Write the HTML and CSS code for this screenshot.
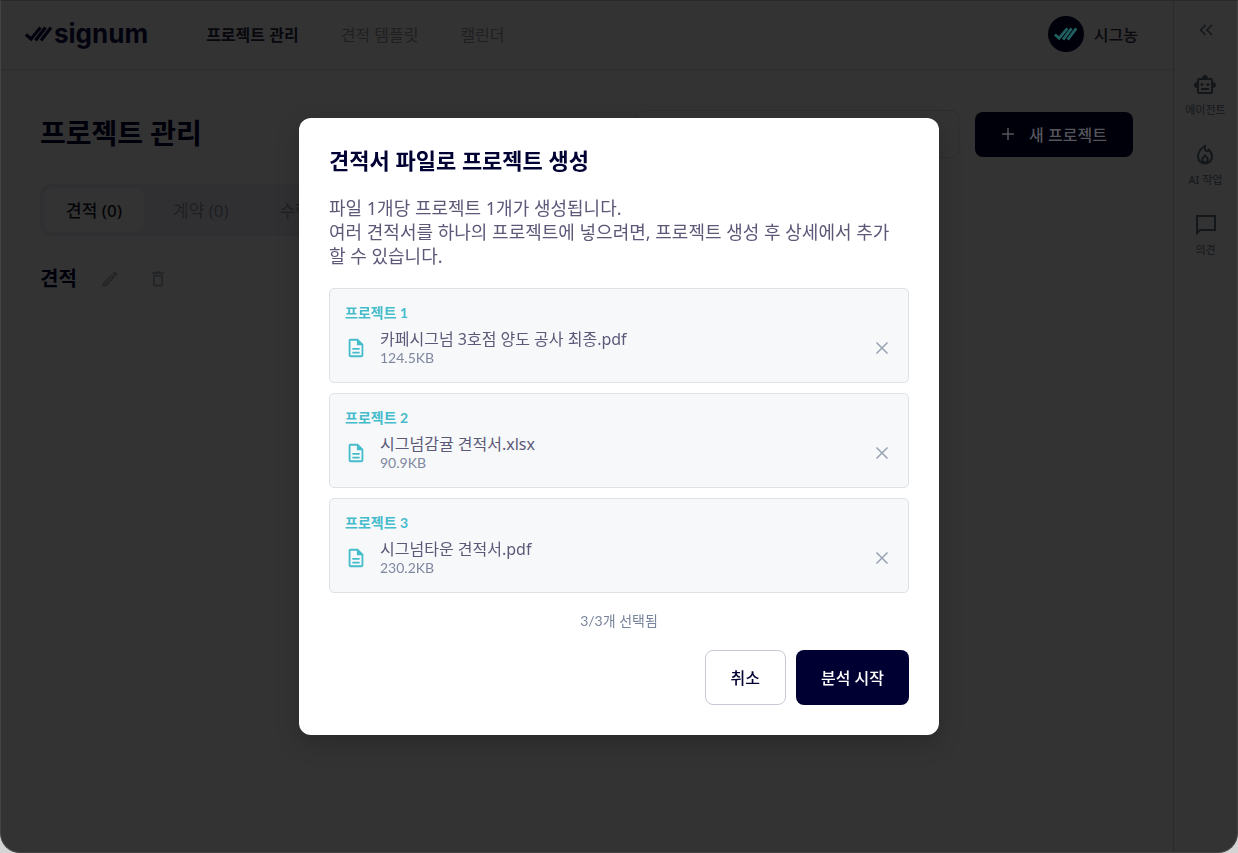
FILE: index.html
```html
<!DOCTYPE html>
<html lang="ko">
<head>
<meta charset="utf-8">
<title>signum</title>
<link rel="stylesheet" href="styles.css">
</head>
<body>

<div class="window">

<div class="main">
  <header class="header">
    <a class="logo" href="#">
      <svg width="28" height="16" viewBox="0 0 28 16" fill="none" stroke="currentColor" stroke-width="3.200"><path d="M1 8.500L6 13L15.500 1.500M10.500 14.500L20.500 1.500M16 14.500L26 1.500"/></svg>
      <span>signum</span>
    </a>
    <nav class="nav">
      <a class="active" href="#">프로젝트 관리</a>
      <a href="#">견적 템플릿</a>
      <a href="#">캘린더</a>
    </nav>
    <div class="user">
      <span class="avatar">
        <svg width="24" height="14" viewBox="0 0 28 16" fill="none" stroke="currentColor" stroke-width="3.200"><path d="M1 8.500L6 13L15.500 1.500M10.500 14.500L20.500 1.500M16 14.500L26 1.500"/></svg>
      </span>
      <span>시그농</span>
    </div>
  </header>

  <div class="content">
    <div class="title_row">
      <h1>프로젝트 관리</h1>
      <input class="search" type="text" aria-label="검색">
      <button class="new_project">
        <svg width="14" height="14" viewBox="0 0 14 14" fill="none" stroke="currentColor" stroke-width="1.500"><path d="M7 1v12M1 7h12"/></svg>
        새 프로젝트
      </button>
    </div>

    <div class="tabs">
      <button class="tab selected">견적 (0)</button>
      <button class="tab">계약 (0)</button>
      <button class="tab">수행 (0)</button>
    </div>

    <div class="section">
      <h2>견적</h2>
      <button class="icon_button" aria-label="수정">
        <svg width="20" height="20" viewBox="0 0 24 24" fill="currentColor"><path d="M14.060 9.020l.92.92L5.920 19H5v-.92l9.060-9.060M17.660 3c-.25 0-.51.1-.7.290l-1.830 1.830 3.750 3.750 1.830-1.830c.39-.39.39-1.020 0-1.410l-2.340-2.340c-.2-.2-.45-.29-.71-.29zm-3.600 3.190L3 17.250V21h3.750L17.810 9.940l-3.750-3.750z"/></svg>
      </button>
      <button class="icon_button" aria-label="삭제">
        <svg width="20" height="20" viewBox="0 0 24 24" fill="currentColor"><path d="M6 19c0 1.100.9 2 2 2h8c1.100 0 2-.9 2-2V7H6v12zM8 9h8v10H8V9zm7.500-5l-1-1h-5l-1 1H5v2h14V4h-3.500z"/></svg>
      </button>
    </div>
  </div>
</div>

<aside class="side">
  <button class="fold" aria-label="펼치기">
    <svg width="24" height="24" viewBox="0 0 24 24" fill="none" stroke="currentColor" stroke-width="1.500"><path d="M11.500 7l-5 5 5 5M18 7l-5 5 5 5"/></svg>
  </button>
  <button class="side_item">
    <svg width="24" height="24" viewBox="0 0 24 24" fill="currentColor"><path d="M20 9V7c0-1.100-.9-2-2-2h-3c0-1.660-1.340-3-3-3S9 3.340 9 5H6c-1.100 0-2 .9-2 2v2c-1.660 0-3 1.340-3 3s1.340 3 3 3v4c0 1.100.9 2 2 2h12c1.100 0 2-.9 2-2v-4c1.660 0 3-1.340 3-3s-1.340-3-3-3zm-2 10H6V7h12v12zm-9-6c-.83 0-1.500-.67-1.500-1.500S8.170 10 9 10s1.500.67 1.500 1.500S9.830 13 9 13zm7.500-1.500c0 .83-.67 1.500-1.500 1.500s-1.500-.67-1.500-1.500.67-1.500 1.500-1.500 1.500.67 1.500 1.500zM8 15h8v2H8v-2z"/></svg>
    에이전트
  </button>
  <button class="side_item">
    <svg width="24" height="24" viewBox="0 0 24 24" fill="none" stroke="currentColor" stroke-width="2"><path d="M12 3C7 6 5 9.500 5 13.500a7 7 0 0 0 14 0c0-3-1.200-5-3.200-6.800C14.500 8.800 12 8.500 12 6V3z"/><path d="M12 12.500l-2 2.200c-1.500 1.800-.5 4.800 2 4.800s3.500-3 2-4.800z"/></svg>
    AI 작업
  </button>
  <button class="side_item">
    <svg width="24" height="24" viewBox="0 0 24 24" fill="none" stroke="currentColor" stroke-width="2"><path d="M3 3h18v14H6l-3 3z"/></svg>
    의견
  </button>
</aside>

</div>

<!-- file upload dialog -->
<div class="overlay">
<div class="modal" role="dialog" aria-modal="true" aria-labelledby="modal_title">
  <h2 id="modal_title">견적서 파일로 프로젝트 생성</h2>
  <p class="desc">파일 1개당 프로젝트 1개가 생성됩니다.<br>여러 견적서를 하나의 프로젝트에 넣으려면, 프로젝트 생성 후 상세에서 추가할 수 있습니다.</p>

  <ul class="files">
    <li class="file">
      <strong>프로젝트 1</strong>
      <div class="file_row">
        <svg class="doc" width="22" height="22" viewBox="0 0 24 24" fill="currentColor"><path d="M8 16h8v2H8zm0-4h8v2H8zm6-10H6c-1.100 0-2 .9-2 2v16c0 1.100.89 2 1.990 2H18c1.100 0 2-.9 2-2V8l-6-6zm4 18H6V4h7v5h5v11z"/></svg>
        <div class="info">
          <div class="name">카페시그넘 3호점 양도 공사 최종.pdf</div>
          <div class="size">124.5KB</div>
        </div>
        <button class="remove" aria-label="파일 삭제"><svg width="14" height="14" viewBox="0 0 14 14" fill="none" stroke="currentColor" stroke-width="1.500"><path d="M1.500 1.500l11 11M12.500 1.500l-11 11"/></svg></button>
      </div>
    </li>
    <li class="file">
      <strong>프로젝트 2</strong>
      <div class="file_row">
        <svg class="doc" width="22" height="22" viewBox="0 0 24 24" fill="currentColor"><path d="M8 16h8v2H8zm0-4h8v2H8zm6-10H6c-1.100 0-2 .9-2 2v16c0 1.100.89 2 1.990 2H18c1.100 0 2-.9 2-2V8l-6-6zm4 18H6V4h7v5h5v11z"/></svg>
        <div class="info">
          <div class="name">시그넘감귤 견적서.xlsx</div>
          <div class="size">90.9KB</div>
        </div>
        <button class="remove" aria-label="파일 삭제"><svg width="14" height="14" viewBox="0 0 14 14" fill="none" stroke="currentColor" stroke-width="1.500"><path d="M1.500 1.500l11 11M12.500 1.500l-11 11"/></svg></button>
      </div>
    </li>
    <li class="file">
      <strong>프로젝트 3</strong>
      <div class="file_row">
        <svg class="doc" width="22" height="22" viewBox="0 0 24 24" fill="currentColor"><path d="M8 16h8v2H8zm0-4h8v2H8zm6-10H6c-1.100 0-2 .9-2 2v16c0 1.100.89 2 1.990 2H18c1.100 0 2-.9 2-2V8l-6-6zm4 18H6V4h7v5h5v11z"/></svg>
        <div class="info">
          <div class="name">시그넘타운 견적서.pdf</div>
          <div class="size">230.2KB</div>
        </div>
        <button class="remove" aria-label="파일 삭제"><svg width="14" height="14" viewBox="0 0 14 14" fill="none" stroke="currentColor" stroke-width="1.500"><path d="M1.500 1.500l11 11M12.500 1.500l-11 11"/></svg></button>
      </div>
    </li>
  </ul>

  <p class="count">3/3개 선택됨</p>

  <div class="buttons">
    <button class="cancel">취소</button>
    <button class="start">분석 시작</button>
  </div>
</div>
</div>

</body>
</html>
```
FILE: styles.css
```css
* {
  box-sizing: border-box;
}

body {
  margin: 0;
  background-color: #d4d4d4;
  font-family: "Noto Sans", "Noto Sans CJK KR", sans-serif;
  font-size: 16px;
}

h1, h2, p, ul {
  margin: 0;
  padding: 0;
}

a {
  color: inherit;
  text-decoration: none;
}

button {
  font-family: inherit;
  font-size: 16px;
  color: inherit;
  background: none;
  border: 0;
  padding: 0;
}

svg {
  display: block;
  flex-shrink: 0;
}

/* page behind the dialog */
.window {
  display: flex;
  min-height: 100vh;
  background-color: #333333;
  border: 1px solid #444444;
  border-top-color: #292929;
  border-radius: 0 0 20px 20px;
  color: #08080d;
}

.main {
  flex: 1;
}

.header {
  display: flex;
  align-items: center;
  height: 69px;
  padding: 0 35px 3px 24px;
  border-bottom: 1px solid #2d2d2d;
}

.logo {
  display: flex;
  align-items: center;
  gap: 1px;
  color: #03030f;
  font-family: Inter, sans-serif;
  font-size: 26px;
  font-weight: bold;
  line-height: 32px;
}

.nav {
  display: flex;
  gap: 42px;
  margin-left: 58px;
  color: #1f1f22;
}

.nav .active {
  color: #08080d;
  font-weight: bold;
}

.user {
  display: flex;
  align-items: center;
  gap: 10px;
  margin-left: auto;
  font-weight: 500;
}

.avatar {
  display: flex;
  align-items: center;
  justify-content: center;
  width: 36px;
  height: 36px;
  border-radius: 50%;
  background-color: #00000a;
  color: #206060;
}

.content {
  padding: 40px 40px 40px 39px;
}

.title_row {
  display: flex;
  align-items: center;
  gap: 16px;
}

h1 {
  flex: 1;
  padding-bottom: 2px;
  font-size: 28px;
  line-height: 44px;
  color: #00000a;
}

.search {
  width: 324px;
  height: 48px;
  border: 1px solid #2e2e2e;
  border-radius: 8px;
  background: none;
}

.new_project {
  display: flex;
  align-items: center;
  justify-content: center;
  gap: 14px;
  width: 158px;
  height: 45px;
  border-radius: 8px;
  background-color: #00000a;
  color: #55555c;
  font-weight: 500;
}

.tabs {
  display: flex;
  gap: 7px;
  width: 480px;
  margin-top: 26px;
  padding: 4px;
  border-radius: 12px;
  background-color: #303033;
}

.tab {
  height: 44px;
  padding: 0 22px 2px;
  border-radius: 8px;
  font-size: 17px;
  color: #1f1f22;
}

.tab.selected {
  background-color: #333333;
  color: #050508;
  font-weight: 500;
}

.section {
  display: flex;
  align-items: center;
  gap: 28px;
  margin-top: 27px;
}

.section h2 {
  margin-right: -5px;
  font-size: 20px;
  line-height: 32px;
  color: #00000a;
}

.icon_button {
  color: #222426;
}

.side {
  width: 64px;
  border-left: 1px solid #2a2a2a;
  display: flex;
  flex-direction: column;
  align-items: center;
  gap: 22px;
  padding-top: 17px;
  color: #14171a;
}

.fold {
  margin-bottom: 9px;
}

.side_item {
  display: flex;
  flex-direction: column;
  align-items: center;
  gap: 2px;
  font-size: 11px;
  line-height: 22px;
}

/* dialog */
.overlay {
  position: fixed;
  inset: 0;
  display: flex;
  align-items: center;
  justify-content: center;
}

.modal {
  width: 640px;
  max-width: 100%;
  padding: 30px;
  border-radius: 12px;
  background-color: #ffffff;
  box-shadow: 0 8px 24px rgba(0, 0, 0, 0.2);
  color: #000033;
}

.modal h2 {
  font-size: 22px;
  line-height: 24px;
}

.desc {
  margin-top: 24px;
  padding-right: 8px;
  font-size: 18px;
  line-height: 24px;
  color: #5c5878;
  word-break: break-all;
}

.files {
  display: flex;
  flex-direction: column;
  gap: 10px;
  margin-top: 20px;
  list-style: none;
}

.file {
  padding: 15px;
  border: 1px solid #dde2e6;
  border-radius: 5px;
  background-color: #f6f8fa;
}

.file strong {
  display: block;
  margin-bottom: 7px;
  font-family: Lato, "Noto Sans CJK KR", sans-serif;
  font-size: 14px;
  line-height: 18px;
  color: #45bccb;
}

.file_row {
  display: flex;
  align-items: center;
  gap: 13px;
  padding-right: 4px;
}

.doc {
  color: #45bccb;
}

.info {
  flex: 1;
}

.name {
  font-size: 16px;
  line-height: 20px;
  color: #5c5878;
}

.size {
  font-family: Lato, sans-serif;
  font-size: 14px;
  line-height: 18px;
  color: #8088a0;
}

.remove {
  color: #98a2b3;
}

.count {
  margin-top: 18px;
  text-align: center;
  font-family: Lato, "Noto Sans CJK KR", sans-serif;
  font-size: 14px;
  line-height: 20px;
  color: #78849a;
}

.buttons {
  display: flex;
  justify-content: flex-end;
  gap: 10px;
  margin-top: 19px;
}

.buttons button {
  height: 55px;
  padding: 0 25px 2px;
  border-radius: 8px;
  font-weight: 500;
}

.buttons .cancel {
  border: 1px solid #c8c8d6;
}

.buttons .start {
  background-color: #000033;
  color: #ffffff;
}
```
